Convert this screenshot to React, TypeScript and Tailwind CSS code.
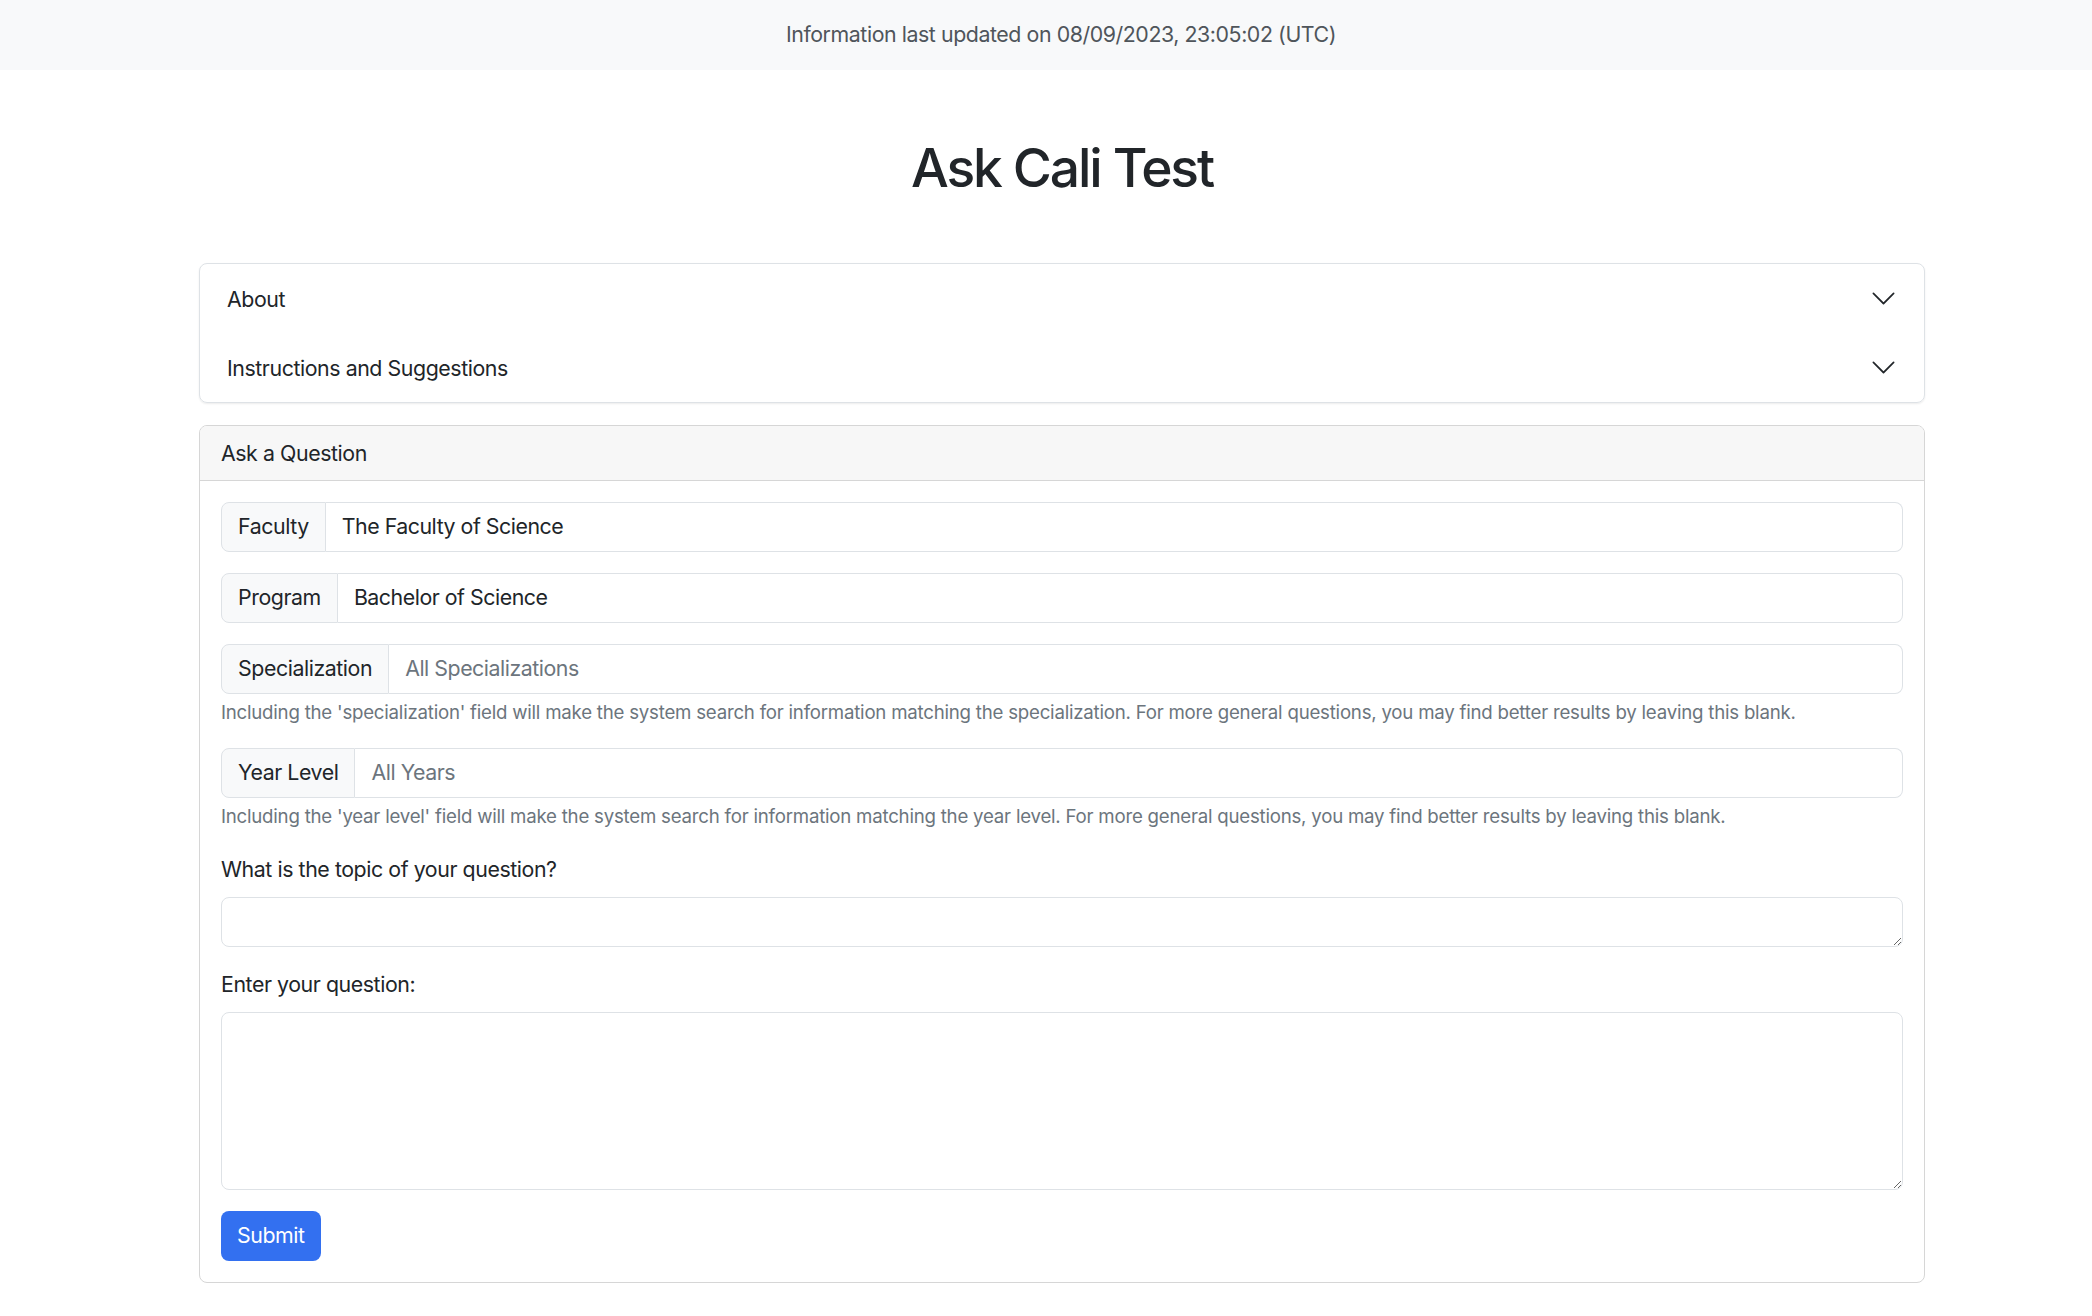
import React from 'react';

const Chevron = () => (
  <svg width="27" height="27" viewBox="0 0 16 16" fill="#212529">
    <path
      fillRule="evenodd"
      d="M1.646 4.646a.5.5 0 0 1 .708 0L8 10.293l5.646-5.647a.5.5 0 0 1 .708.708l-6 6a.5.5 0 0 1-.708 0l-6-6a.5.5 0 0 1 0-.708z"
    />
  </svg>
);

const AccordionItem = ({ title }: { title: string }) => (
  <button className="flex w-full items-center justify-between px-[27px] py-[18.5px] text-left leading-[32px]">
    <span>{title}</span>
    <Chevron />
  </button>
);

const InputGroup = ({
  label,
  value,
  placeholder,
}: {
  label: string;
  value?: string;
  placeholder?: string;
}) => (
  <div className="flex h-[50px]">
    <span className="flex items-center rounded-l-[8px] border border-[#dee2e6] bg-[#f8f9fa] px-[16px]">
      {label}
    </span>
    <input
      readOnly
      defaultValue={value}
      placeholder={placeholder}
      className="flex-1 rounded-r-[8px] border border-l-0 border-[#dee2e6] bg-white px-[16px] tracking-[-0.022em] text-[#212529] outline-none placeholder:text-[#6c757d]"
    />
  </div>
);

const HelpText = ({ children }: { children: React.ReactNode }) => (
  <p className="mt-[5px] text-[18.67px] leading-[28px] tracking-[-0.012em] text-[#6c757d]">{children}</p>
);

export default function App() {
  return (
    <div className="min-h-screen bg-white font-['Inter',sans-serif] text-[21.33px] tracking-[-0.02em] text-[#212529]">
      <div className="flex h-[70px] items-center justify-center bg-[#f8f9fa] pl-[30px] tracking-[-0.02em] text-[#4f555b]">
        Information last updated on 08/09/2023, 23:05:02 (UTC)
      </div>

      <div className="ml-[199px] w-[1726px]">
        <h1 className="mb-[63px] mt-[66px] text-center text-[53.33px] font-medium leading-[64px] tracking-[-0.04em]">
          Ask Cali Test
        </h1>

        <div className="rounded-[8px] border border-[#dee2e6] shadow-[0_1px_2px_rgba(0,0,0,0.08)]">
          <AccordionItem title="About" />
          <AccordionItem title="Instructions and Suggestions" />
        </div>

        <div className="mt-[22px] overflow-hidden rounded-[8px] border border-[#d6d6d6]">
          <div className="border-b border-[#d6d6d6] bg-[#f7f7f7] px-[21px] py-[11px] leading-[32px]">
            Ask a Question
          </div>
          <div className="p-[21px]">
            <div className="flex flex-col gap-[21px]">
              <InputGroup label="Faculty" value="The Faculty of Science" />
              <InputGroup label="Program" value="Bachelor of Science" />
              <div>
                <InputGroup label="Specialization" placeholder="All Specializations" />
                <HelpText>
                  Including the 'specialization' field will make the system search for information matching the
                  specialization. For more general questions, you may find better results by leaving this blank.
                </HelpText>
              </div>
              <div>
                <InputGroup label="Year Level" placeholder="All Years" />
                <HelpText>
                  Including the 'year level' field will make the system search for information matching the year
                  level. For more general questions, you may find better results by leaving this blank.
                </HelpText>
              </div>
              <div className="mt-[1px]">
                <label className="mb-[12px] block leading-[32px]">What is the topic of your question?</label>
                <textarea
                  rows={1}
                  className="block h-[50px] w-full rounded-[8px] border border-[#dee2e6] px-[16px] py-[8px] leading-[32px] outline-none"
                />
              </div>
              <div>
                <label className="mb-[12px] block leading-[32px]">Enter your question:</label>
                <textarea
                  rows={5}
                  className="block h-[178px] w-full rounded-[8px] border border-[#dee2e6] px-[16px] py-[8px] leading-[32px] outline-none"
                />
              </div>
            </div>
            <button className="mt-[21px] h-[50px] rounded-[8px] bg-[#3370f0] px-[16px] text-white">Submit</button>
          </div>
        </div>
      </div>
    </div>
  );
}
